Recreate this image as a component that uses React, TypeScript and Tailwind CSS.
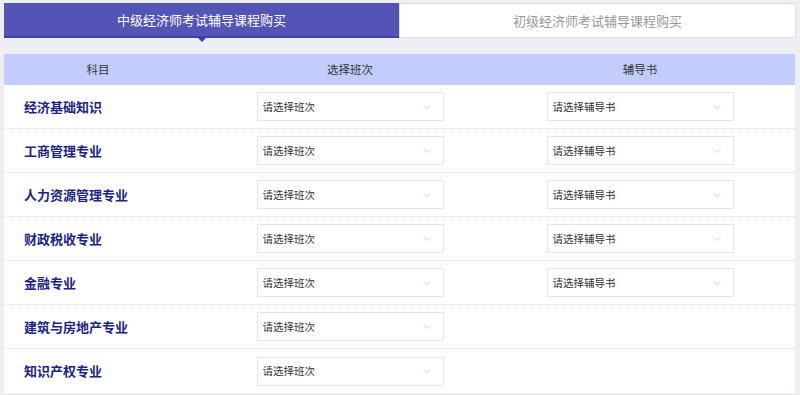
import { ChevronDown } from 'lucide-react';

const rows = [
  { name: '经济基础知识', book: true },
  { name: '工商管理专业', book: true },
  { name: '人力资源管理专业', book: true },
  { name: '财政税收专业', book: true },
  { name: '金融专业', book: true },
  { name: '建筑与房地产专业', book: false },
  { name: '知识产权专业', book: false },
];

function Select({ label }: { label: string }) {
  return (
    <div className="w-[187px] h-[29px] border border-[#e6e6e6] bg-white flex items-center justify-between pl-[5px] pr-[10px] text-[10.5px] text-[#333]">
      <span>{label}</span>
      <ChevronDown size={12} strokeWidth={1.2} className="text-[#aaa]" />
    </div>
  );
}

export default function App() {
  return (
    <div
      className="w-[800px] h-[395px] bg-[#eeeff4] pt-[3px] pl-[4px] overflow-hidden"
      style={{ fontFamily: '"Noto Sans CJK SC", "Noto Sans", sans-serif' }}
    >
      {/* Tabs */}
      <div className="flex w-[792px] h-[35px]">
        <div className="relative w-[395px] bg-[#5453b6] border-b-2 border-[#403fab] flex items-center justify-center text-white text-[13px]">
          中级经济师考试辅导课程购买
          <div className="absolute left-1/2 -translate-x-1/2 top-full w-0 h-0 border-l-[6px] border-r-[6px] border-t-[6px] border-l-transparent border-r-transparent border-t-[#403fab]" />
        </div>
        <div className="flex-1 bg-white border border-[#dcdde3] flex items-center justify-center text-[#999] text-[13px]">
          初级经济师考试辅导课程购买
        </div>
      </div>

      {/* Table */}
      <div className="mt-[16px] w-[791px]">
        <div className="grid grid-cols-[188px_316px_264px_1fr] h-[31px] bg-[#c3cdfd] items-center text-[11.5px] text-[#333]">
          <div className="text-center">科目</div>
          <div className="text-center">选择班次</div>
          <div className="text-center">辅导书</div>
          <div />
        </div>
        <div className="bg-white">
          {rows.map((r, i) => (
            <div
              key={r.name}
              className={`grid grid-cols-[188px_316px_264px_1fr] h-[44px] items-center ${i < rows.length - 1 ? 'border-b border-dotted border-[#dcdde4]' : ''}`}
            >
              <div className="pl-[20px] text-[13px] font-bold text-[#1b2488]">{r.name}</div>
              <div className="flex justify-center">
                <Select label="请选择班次" />
              </div>
              <div className="flex justify-center">
                {r.book && <Select label="请选择辅导书" />}
              </div>
              <div />
            </div>
          ))}
        </div>
      </div>
    </div>
  );
}
